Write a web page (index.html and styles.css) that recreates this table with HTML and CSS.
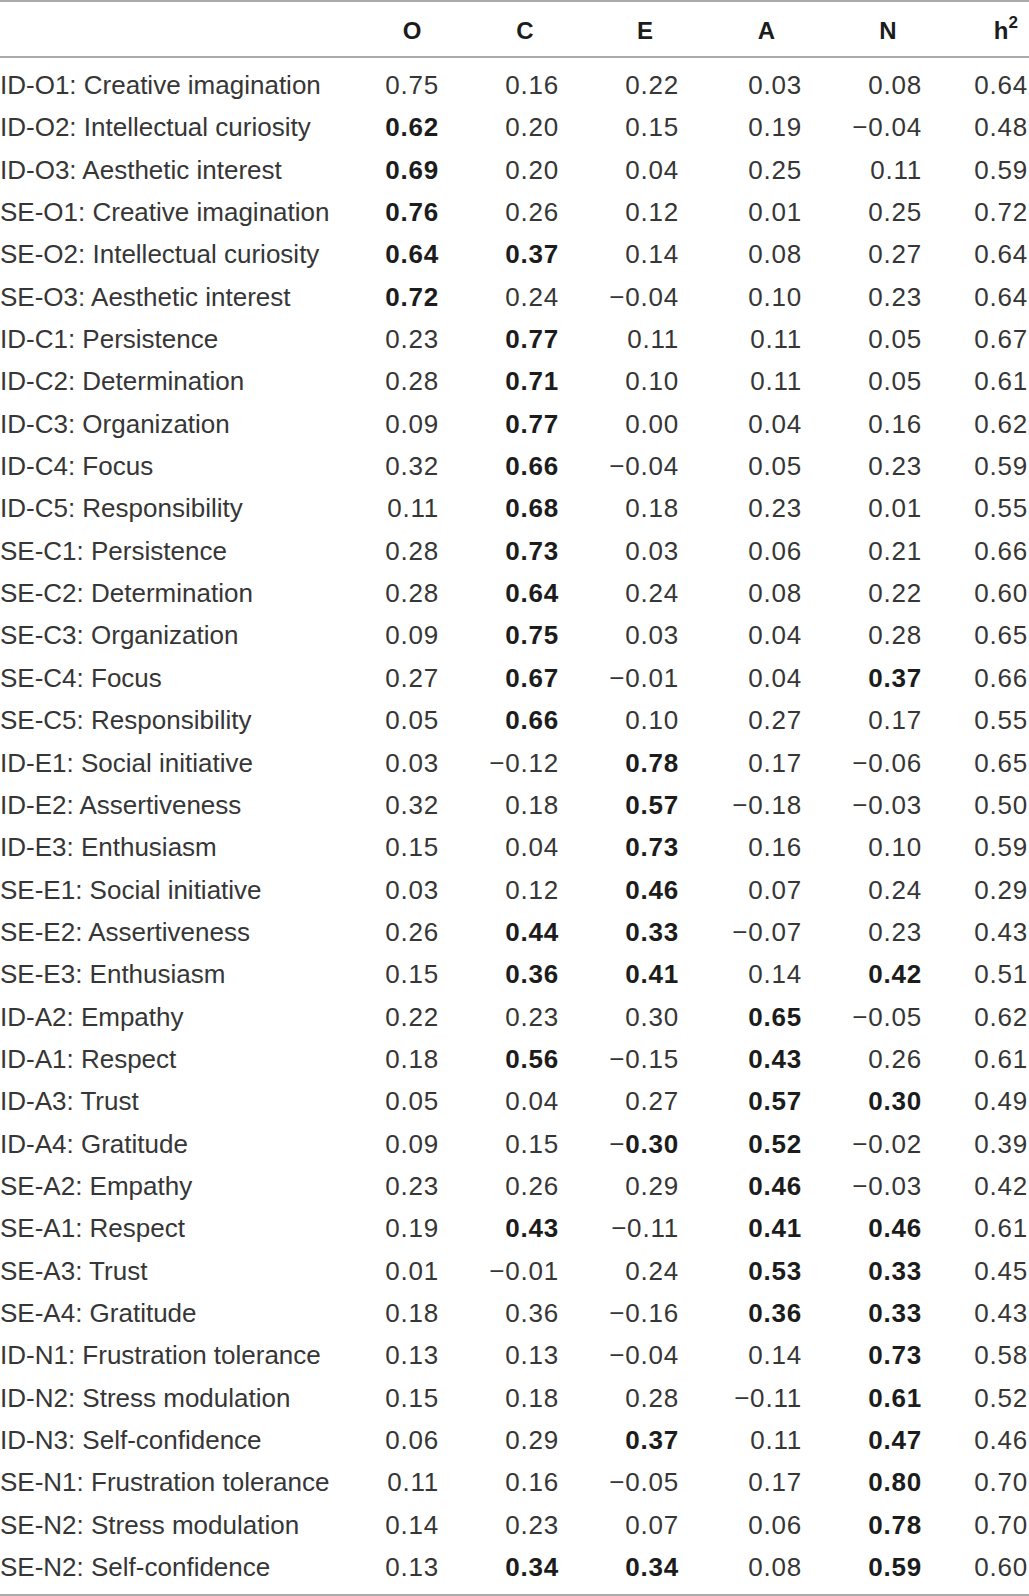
FILE: index.html
```html
<!DOCTYPE html>
<html lang="en">
<head>
  <meta charset="UTF-8" />
  <meta name="viewport" content="width=device-width, initial-scale=1.0" />
  <title>Factor Loadings</title>
  <link rel="stylesheet" href="styles.css">
</head>
<body>
  <table class="loadings">
    <colgroup>
      <col class="col-label">
      <col class="col-o">
      <col class="col-num">
      <col class="col-num">
      <col class="col-a">
      <col class="col-num">
      <col class="col-h">
    </colgroup>
    <thead>
      <tr>
        <th></th>
        <th>O</th>
        <th>C</th>
        <th>E</th>
        <th>A</th>
        <th>N</th>
        <th class="h2">h<sup>2</sup></th>
      </tr>
    </thead>
    <tbody>
      <tr class="first"><td>ID-O1: Creative imagination</td><td>0.75</td><td>0.16</td><td>0.22</td><td>0.03</td><td>0.08</td><td>0.64</td></tr>
      <tr><td>ID-O2: Intellectual curiosity</td><td><b>0.62</b></td><td>0.20</td><td>0.15</td><td>0.19</td><td>&minus;0.04</td><td>0.48</td></tr>
      <tr><td>ID-O3: Aesthetic interest</td><td><b>0.69</b></td><td>0.20</td><td>0.04</td><td>0.25</td><td>0.11</td><td>0.59</td></tr>
      <tr><td>SE-O1: Creative imagination</td><td><b>0.76</b></td><td>0.26</td><td>0.12</td><td>0.01</td><td>0.25</td><td>0.72</td></tr>
      <tr><td>SE-O2: Intellectual curiosity</td><td><b>0.64</b></td><td><b>0.37</b></td><td>0.14</td><td>0.08</td><td>0.27</td><td>0.64</td></tr>
      <tr><td>SE-O3: Aesthetic interest</td><td><b>0.72</b></td><td>0.24</td><td>&minus;0.04</td><td>0.10</td><td>0.23</td><td>0.64</td></tr>
      <tr><td>ID-C1: Persistence</td><td>0.23</td><td><b>0.77</b></td><td>0.11</td><td>0.11</td><td>0.05</td><td>0.67</td></tr>
      <tr><td>ID-C2: Determination</td><td>0.28</td><td><b>0.71</b></td><td>0.10</td><td>0.11</td><td>0.05</td><td>0.61</td></tr>
      <tr><td>ID-C3: Organization</td><td>0.09</td><td><b>0.77</b></td><td>0.00</td><td>0.04</td><td>0.16</td><td>0.62</td></tr>
      <tr><td>ID-C4: Focus</td><td>0.32</td><td><b>0.66</b></td><td>&minus;0.04</td><td>0.05</td><td>0.23</td><td>0.59</td></tr>
      <tr><td>ID-C5: Responsibility</td><td>0.11</td><td><b>0.68</b></td><td>0.18</td><td>0.23</td><td>0.01</td><td>0.55</td></tr>
      <tr><td>SE-C1: Persistence</td><td>0.28</td><td><b>0.73</b></td><td>0.03</td><td>0.06</td><td>0.21</td><td>0.66</td></tr>
      <tr><td>SE-C2: Determination</td><td>0.28</td><td><b>0.64</b></td><td>0.24</td><td>0.08</td><td>0.22</td><td>0.60</td></tr>
      <tr><td>SE-C3: Organization</td><td>0.09</td><td><b>0.75</b></td><td>0.03</td><td>0.04</td><td>0.28</td><td>0.65</td></tr>
      <tr><td>SE-C4: Focus</td><td>0.27</td><td><b>0.67</b></td><td>&minus;0.01</td><td>0.04</td><td><b>0.37</b></td><td>0.66</td></tr>
      <tr><td>SE-C5: Responsibility</td><td>0.05</td><td><b>0.66</b></td><td>0.10</td><td>0.27</td><td>0.17</td><td>0.55</td></tr>
      <tr><td>ID-E1: Social initiative</td><td>0.03</td><td>&minus;0.12</td><td><b>0.78</b></td><td>0.17</td><td>&minus;0.06</td><td>0.65</td></tr>
      <tr><td>ID-E2: Assertiveness</td><td>0.32</td><td>0.18</td><td><b>0.57</b></td><td>&minus;0.18</td><td>&minus;0.03</td><td>0.50</td></tr>
      <tr><td>ID-E3: Enthusiasm</td><td>0.15</td><td>0.04</td><td><b>0.73</b></td><td>0.16</td><td>0.10</td><td>0.59</td></tr>
      <tr><td>SE-E1: Social initiative</td><td>0.03</td><td>0.12</td><td><b>0.46</b></td><td>0.07</td><td>0.24</td><td>0.29</td></tr>
      <tr><td>SE-E2: Assertiveness</td><td>0.26</td><td><b>0.44</b></td><td><b>0.33</b></td><td>&minus;0.07</td><td>0.23</td><td>0.43</td></tr>
      <tr><td>SE-E3: Enthusiasm</td><td>0.15</td><td><b>0.36</b></td><td><b>0.41</b></td><td>0.14</td><td><b>0.42</b></td><td>0.51</td></tr>
      <tr><td>ID-A2: Empathy</td><td>0.22</td><td>0.23</td><td>0.30</td><td><b>0.65</b></td><td>&minus;0.05</td><td>0.62</td></tr>
      <tr><td>ID-A1: Respect</td><td>0.18</td><td><b>0.56</b></td><td>&minus;0.15</td><td><b>0.43</b></td><td>0.26</td><td>0.61</td></tr>
      <tr><td>ID-A3: Trust</td><td>0.05</td><td>0.04</td><td>0.27</td><td><b>0.57</b></td><td><b>0.30</b></td><td>0.49</td></tr>
      <tr><td>ID-A4: Gratitude</td><td>0.09</td><td>0.15</td><td>&minus;<b>0.30</b></td><td><b>0.52</b></td><td>&minus;0.02</td><td>0.39</td></tr>
      <tr><td>SE-A2: Empathy</td><td>0.23</td><td>0.26</td><td>0.29</td><td><b>0.46</b></td><td>&minus;0.03</td><td>0.42</td></tr>
      <tr><td>SE-A1: Respect</td><td>0.19</td><td><b>0.43</b></td><td>&minus;0.11</td><td><b>0.41</b></td><td><b>0.46</b></td><td>0.61</td></tr>
      <tr><td>SE-A3: Trust</td><td>0.01</td><td>&minus;0.01</td><td>0.24</td><td><b>0.53</b></td><td><b>0.33</b></td><td>0.45</td></tr>
      <tr><td>SE-A4: Gratitude</td><td>0.18</td><td>0.36</td><td>&minus;0.16</td><td><b>0.36</b></td><td><b>0.33</b></td><td>0.43</td></tr>
      <tr><td>ID-N1: Frustration tolerance</td><td>0.13</td><td>0.13</td><td>&minus;0.04</td><td>0.14</td><td><b>0.73</b></td><td>0.58</td></tr>
      <tr><td>ID-N2: Stress modulation</td><td>0.15</td><td>0.18</td><td>0.28</td><td>&minus;0.11</td><td><b>0.61</b></td><td>0.52</td></tr>
      <tr><td>ID-N3: Self-confidence</td><td>0.06</td><td>0.29</td><td><b>0.37</b></td><td>0.11</td><td><b>0.47</b></td><td>0.46</td></tr>
      <tr><td>SE-N1: Frustration tolerance</td><td>0.11</td><td>0.16</td><td>&minus;0.05</td><td>0.17</td><td><b>0.80</b></td><td>0.70</td></tr>
      <tr><td>SE-N2: Stress modulation</td><td>0.14</td><td>0.23</td><td>0.07</td><td>0.06</td><td><b>0.78</b></td><td>0.70</td></tr>
      <tr class="last"><td>SE-N2: Self-confidence</td><td>0.13</td><td><b>0.34</b></td><td><b>0.34</b></td><td>0.08</td><td><b>0.59</b></td><td>0.60</td></tr>
    </tbody>
  </table>
</body>
</html>
```

FILE: styles.css
```css
body {
  margin: 0;
  background: #fff;
  font-family: "Liberation Sans", Arial, sans-serif;
  color: #363636;
}
.loadings {
  width: 1029px;
  table-layout: fixed;
  border-collapse: separate;
  border-spacing: 0;
  font-size: 26px;
}
.col-label { width: 359px; }
.col-o { width: 106px; }
.col-num { width: 120px; }
.col-a { width: 123px; }
.col-h { width: 81px; }
th {
  font-size: 24px;
  font-weight: bold;
  color: #1c1c1c;
  text-align: center;
  padding: 4px 0 0 0;
  line-height: 50px;
  border-top: 2px solid #aaa;
  border-bottom: 2px solid #aaa;
}
th.h2 {
  text-align: right;
  padding-right: 11px;
}
th sup {
  font-size: 17px;
  line-height: 0;
  vertical-align: 11px;
}
td {
  padding: 0 26px 0 0;
  line-height: 42.34px;
  text-align: right;
  white-space: nowrap;
  letter-spacing: 0.8px;
}
td:first-child {
  text-align: left;
  padding: 0;
  letter-spacing: 0;
}
td:last-child {
  padding-right: 1px;
}
td b {
  color: #1c1c1c;
}
.first td {
  padding-top: 6px;
}
.last td {
  padding-bottom: 6px;
  border-bottom: 2px solid #aaa;
}
```
